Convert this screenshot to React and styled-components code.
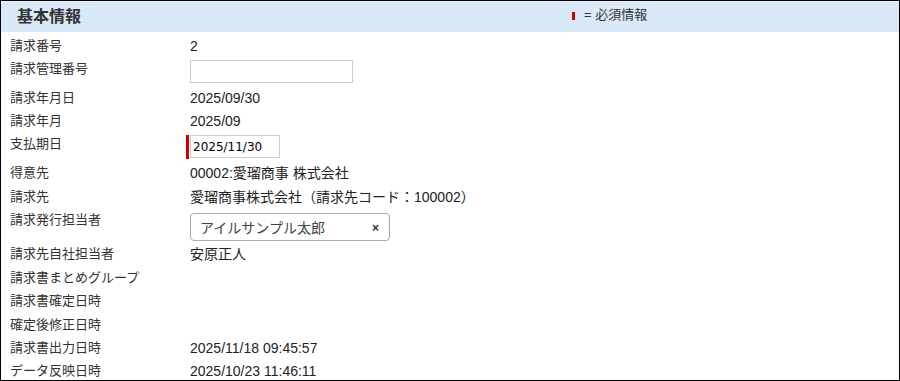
import React from "react";
import styled, { createGlobalStyle } from "styled-components";

const GlobalStyle = createGlobalStyle`
   html, body {
      margin: 0;
      padding: 0;
      background: #fff;
   }
   body {
      font-family: "Liberation Sans", "Noto Sans CJK JP", sans-serif;
   }
`;

const Frame = styled.section`
   width: 900px;
   height: 381px;
   box-sizing: border-box;
   border: 1px solid #000;
   overflow: hidden;
   background: #fff;
`;

const Header = styled.header`
   height: 30px;
   border-top: 1px solid #eef5fc;
   background: #dae9f8;
   display: grid;
   grid-template-columns: 571px auto;
   align-items: start;
`;

const Title = styled.h2`
   margin: 0;
   padding: 5px 0 0 16px;
   font-size: 16px;
   line-height: 20px;
   font-weight: bold;
   color: #333;
`;

const Legend = styled.div`
   display: flex;
   align-items: flex-start;
   gap: 9px;
   padding-top: 5px;
   font-size: 13px;
   line-height: 15px;
   color: #333;
   .bar {
      width: 3px;
      height: 8px;
      margin-top: 5px;
      background: #cc0000;
   }
`;

const Body = styled.div`
   padding-top: 1.5px;
`;

const Row = styled.div`
   display: grid;
   grid-template-columns: 189px 1fr;
   height: ${(p) => p.h}px;
`;

const Label = styled.div`
   padding: 4px 0 0 9px;
   font-size: 13px;
   line-height: 15px;
   color: #333;
   white-space: nowrap;
`;

const Value = styled.div`
   padding-top: ${(p) => (p.pad !== undefined ? p.pad : 4)}px;
   font-size: 14px;
   line-height: 16px;
   color: #222;
   white-space: nowrap;
`;

const TextInput = styled.input`
   display: block;
   box-sizing: border-box;
   width: ${(p) => p.w}px;
   height: 23px;
   margin: 0;
   padding: 0 2px;
   border: 1px solid #ccc;
   border-radius: 0;
   outline: none;
   background: #fff;
   font-family: "DejaVu Sans", sans-serif;
   font-size: 12px;
   color: #000;
`;

const Required = styled.div`
   display: flex;
   align-items: flex-start;
   gap: 1px;
   margin-left: -4px;
   .mark {
      width: 3px;
      height: 24px;
      background: #cc0000;
   }
`;

const Select = styled.div`
   box-sizing: border-box;
   width: 200px;
   height: 28px;
   display: flex;
   align-items: center;
   justify-content: space-between;
   padding: 2px 10px 0 9px;
   border: 1px solid #aaa;
   border-radius: 4px;
   background: #fff;
   font-size: 14px;
   color: #444;
   .clear {
      font-size: 12px;
      font-weight: bold;
      color: #333;
   }
`;

const App = () => {
   return (
      <>
         <GlobalStyle />
         <Frame>
            <Header>
               <Title>基本情報</Title>
               <Legend>
                  <span className="bar"></span>
                  <span>= 必須情報</span>
               </Legend>
            </Header>
            <Body>
               <Row h={23}>
                  <Label>請求番号</Label>
                  <Value>2</Value>
               </Row>
               <Row h={29}>
                  <Label>請求管理番号</Label>
                  <Value pad={3.5}>
                     <TextInput w={163} defaultValue="" />
                  </Value>
               </Row>
               <Row h={23}>
                  <Label>請求年月日</Label>
                  <Value>2025/09/30</Value>
               </Row>
               <Row h={23}>
                  <Label>請求年月</Label>
                  <Value>2025/09</Value>
               </Row>
               <Row h={29}>
                  <Label>支払期日</Label>
                  <Value pad={3.5}>
                     <Required>
                        <span className="mark"></span>
                        <TextInput w={90} defaultValue="2025/11/30" />
                     </Required>
                  </Value>
               </Row>
               <Row h={24}>
                  <Label>得意先</Label>
                  <Value>00002:愛瑠商事 株式会社</Value>
               </Row>
               <Row h={23}>
                  <Label>請求先</Label>
                  <Value>愛瑠商事株式会社（請求先コード：100002）</Value>
               </Row>
               <Row h={34}>
                  <Label>請求発行担当者</Label>
                  <Value pad={5}>
                     <Select>
                        <span>アイルサンプル太郎</span>
                        <span className="clear">×</span>
                     </Select>
                  </Value>
               </Row>
               <Row h={24}>
                  <Label>請求先自社担当者</Label>
                  <Value>安原正人</Value>
               </Row>
               <Row h={23}>
                  <Label>請求書まとめグループ</Label>
                  <Value></Value>
               </Row>
               <Row h={24}>
                  <Label>請求書確定日時</Label>
                  <Value></Value>
               </Row>
               <Row h={23}>
                  <Label>確定後修正日時</Label>
                  <Value></Value>
               </Row>
               <Row h={23}>
                  <Label>請求書出力日時</Label>
                  <Value>2025/11/18 09:45:57</Value>
               </Row>
               <Row h={23}>
                  <Label>データ反映日時</Label>
                  <Value>2025/10/23 11:46:11</Value>
               </Row>
            </Body>
         </Frame>
      </>
   );
};

export default App;
